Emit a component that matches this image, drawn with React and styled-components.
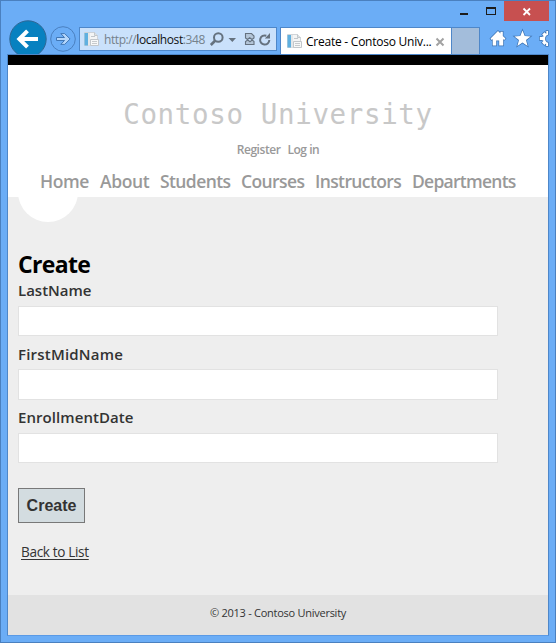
import React from "react";
import styled, { createGlobalStyle } from "styled-components";

const Global = createGlobalStyle`
  * { box-sizing: border-box; }
  html, body { margin: 0; padding: 0; overflow: hidden; }
  body { font-family: "Open Sans", "Noto Sans", sans-serif; }
`;

const Window = styled.div`
  width: 556px;
  height: 643px;
  display: flex;
  flex-direction: column;
  background: #6badf6;
  border: 1px solid #4a80bf;
  padding: 0 6px 6px;
`;

const TitleBar = styled.div`
  height: 20px;
  display: flex;
  justify-content: flex-end;
  flex: none;
`;

const WindowButton = styled.button`
  width: ${(p) => p.$width}px;
  height: 20px;
  padding: 0;
  border: 0;
  background: ${(p) => (p.$close ? "#c75050" : "transparent")};
  svg { display: block; }
`;

const Toolbar = styled.div`
  height: 33px;
  display: flex;
  align-items: flex-end;
  flex: none;
`;

const BackIcon = styled.svg`
  display: block;
  flex: none;
  margin-left: 1px;
`;

const ForwardIcon = styled.svg`
  display: block;
  flex: none;
  margin: 0 2px 1px 1px;
`;

const AddressBar = styled.div`
  width: 198px;
  height: 24px;
  display: flex;
  align-items: center;
  border: 1px solid #4e87c9;
  background: #cae1fb;
  margin-bottom: 3px;
  padding-left: 3px;
  flex: none;
  svg { display: block; flex: none; }
`;

const Address = styled.div`
  width: 102px;
  margin-left: 4px;
  padding-top: 1px;
  white-space: nowrap;
  font: 12px/20px "Open Sans", sans-serif;
  letter-spacing: -0.42px;
  color: #75818c;
  b { font-weight: 400; color: #111; }
`;

const Tab = styled.div`
  width: 172px;
  height: 27px;
  display: flex;
  align-items: center;
  margin-left: 3px;
  padding: 1px 6px 0 5px;
  border: 1px solid #4e87c9;
  border-bottom: 0;
  background: #fff;
  flex: none;
  svg { display: block; flex: none; }
`;

const TabTitle = styled.div`
  width: 130px;
  margin-left: 3px;
  white-space: nowrap;
  font: 12px/20px "Open Sans", sans-serif;
  letter-spacing: -0.24px;
  color: #000;
`;

const NewTab = styled.div`
  width: 28px;
  height: 27px;
  border: 1px solid #4e87c9;
  border-left: 0;
  border-bottom: 0;
  background: #a3bddb;
  flex: none;
`;

const Commands = styled.svg`
  display: block;
  flex: none;
  margin-left: 8px;
`;

const Page = styled.div`
  flex: 1;
  display: flex;
  flex-direction: column;
  border: 1px solid #4e87c9;
  border-bottom-color: #5a9ae6;
  background: #eee;
`;

const Header = styled.header`
  height: 142px;
  flex: none;
  border-top: 10px solid #000;
  background: #fff;
  display: flex;
  flex-direction: column;
  align-items: center;
`;

const SiteTitle = styled.div`
  margin-top: 31px;
  font: 27.5px/36px "DejaVu Sans Mono", monospace;
  letter-spacing: 0.64px;
  white-space: nowrap;
  color: #c8c8c8;
`;

const Account = styled.div`
  display: flex;
  gap: 7px;
  margin-top: 9px;
  font: 600 12px/18px "Open Sans", sans-serif;
  letter-spacing: -0.45px;
  color: #999;
`;

const Nav = styled.nav`
  display: flex;
  align-self: stretch;
  margin-top: 10px;
  padding-left: 32px;
`;

const NavLink = styled.a`
  width: ${(p) => p.$width}px;
  flex: none;
  white-space: nowrap;
  font: 600 17.5px/24px "Open Sans", sans-serif;
  letter-spacing: ${(p) => p.$spacing}px;
  color: #999;
`;

const Main = styled.main`
  flex: 1;
  padding-left: 10px;
`;

const HalfCircle = styled.div`
  width: 60px;
  height: 25px;
  overflow: hidden;
  display: flex;
  align-items: flex-end;
  &::before {
    content: "";
    flex: none;
    width: 60px;
    height: 60px;
    border-radius: 50%;
    background: #fff;
  }
`;

const Heading = styled.h2`
  margin: 27px 0 0;
  font: 700 23px/30px "Open Sans", sans-serif;
  letter-spacing: -0.65px;
  color: #000;
`;

const Field = styled.div`
  height: ${(p) => p.$height}px;
`;

const Label = styled.label`
  display: block;
  height: ${(p) => p.$height || 27}px;
  font: 600 15px/22px "Open Sans", sans-serif;
  letter-spacing: ${(p) => p.$spacing || 0}px;
  color: #333;
`;

const Input = styled.input`
  display: block;
  width: 480px;
  height: ${(p) => p.$height || 30}px;
  border: 1px solid #e2e2e2;
  border-radius: 0;
  background: #fff;
  padding: 5px;
`;

const Submit = styled.button`
  display: block;
  width: 67px;
  height: 35px;
  margin-top: 19px;
  padding: 0;
  border: 1px solid #787878;
  background: #d3dce0;
  font: 700 16px/20px "Liberation Sans", sans-serif;
  color: #333;
`;

const BackLink = styled.a`
  display: inline-block;
  margin: 19px 0 0 3px;
  font: 13.6px/20px "Open Sans", sans-serif;
  letter-spacing: -0.35px;
  text-decoration: underline;
  text-underline-offset: 2px;
  text-decoration-thickness: 1px;
  color: #333;
`;

const Footer = styled.footer`
  height: 40px;
  flex: none;
  background: #e2e2e2;
  text-align: center;
  font: 11px/36px "Open Sans", sans-serif;
  letter-spacing: -0.26px;
  color: #333;
`;

function PageIcon() {
  return (
    <svg width="17" height="17" viewBox="0 0 17 17">
      <path d="M1.5 1.5h10l3 3v10h-13z" fill="#f4f5f5" stroke="#c6cbd0" strokeWidth=".8" />
      <path d="M11.5 1.5v3h3" fill="#dde1e4" stroke="#b9bfc4" strokeWidth=".8" />
      <path d="M1.500 2h3.500v12.500h-3.500z" fill="#5fb0e0" />
      <path d="M5 2h2v12.500H5z" fill="#e5e7e9" />
      <path d="M8 5.500h4M7.500 8.500h8v6h-8z" fill="#f7f8f8" stroke="#c2c7cb" />
      <path d="M9 10.500h5M9 12.500h5" stroke="#c6cacd" />
    </svg>
  );
}

const links = [
  ["Home", 60, -0.4],
  ["About", 60, -0.4],
  ["Students", 81, -0.6],
  ["Courses", 74, -0.6],
  ["Instructors", 97, -0.62],
  ["Departments", 110, -0.74],
];

export default function App() {
  return (
    <>
      <Global />
      <Window>
        <TitleBar>
          <WindowButton $width={28} aria-label="Minimize">
            <svg width="28" height="20"><path d="M9 12h8v2H9z" fill="#1c1c1c" /></svg>
          </WindowButton>
          <WindowButton $width={25} aria-label="Maximize">
            <svg width="25" height="20"><path d="M7 6h10v8H7zM8 8v5h8V8z" fillRule="evenodd" fill="#1c1c1c" /></svg>
          </WindowButton>
          <WindowButton $width={45} $close aria-label="Close">
            <svg width="45" height="20"><path d="M19.500 7.500l6.500 6.500M26 7.500l-6.500 6.500" stroke="#fff" strokeWidth="1.8" /></svg>
          </WindowButton>
        </TitleBar>
        <Toolbar>
          <BackIcon width="40" height="34" viewBox="8 20 40 34">
            <circle cx="28" cy="39" r="18.2" fill="#0781c0" stroke="#2f6795" strokeWidth="1" />
            <path d="M38 39H21M27.500 30.800L19.300 39l8.200 8.200" fill="none" stroke="#fff" strokeWidth="4" />
          </BackIcon>
          <ForwardIcon width="28" height="28" viewBox="49 25 28 28">
            <circle cx="63" cy="39" r="12.3" fill="none" stroke="#4a80c0" />
            <path d="M56.500 37.500h8l-3.700-3.900h3.900l5.400 5.400-5.400 5.400h-3.900l3.700-3.900h-8z" fill="#b4d6fb" stroke="#4077b6" />
          </ForwardIcon>
          <AddressBar>
            <PageIcon />
            <Address>http://<b>localhost</b>:348</Address>
            <svg width="66" height="22" viewBox="206 28 66 22">
              <g fill="none" stroke="#65727f">
                <circle cx="218.300" cy="37.500" r="4.300" strokeWidth="2" />
                <path d="M215.300 40.500l-4.500 4.500" strokeWidth="2.6" />
                <path d="M269.300 40a4.600 4.600 0 1 1-3-4.300" strokeWidth="2" />
                <path d="M245.500 38v-4.500h6l2.500 2.500v2l-2 1.500-2.300-1.800-2.200 1.800zM245.500 44.500v-3l2.300-1.500 2.200 1.800 2.200-1.800 1.800 1.500v3z" fill="#b3c5d8" strokeWidth="1.100" />
              </g>
              <path d="M228.500 38h7.500l-3.700 4zM264.800 38.500h5.200v-5.500z" fill="#65727f" />
            </svg>
          </AddressBar>
          <Tab>
            <PageIcon />
            <TabTitle>Create - Contoso Univ...</TabTitle>
            <svg width="10" height="10"><path d="M1.500 1.500l7 7M8.500 1.500l-7 7" stroke="#a2a2a2" strokeWidth="2" /></svg>
          </Tab>
          <NewTab />
          <Commands width="61" height="27" viewBox="488 27 61 27">
            <g fill="#fff" stroke="#3d73b2" strokeWidth="1.4" paintOrder="stroke">
              <path d="M490.500 38.600l7.500-7.500 2.400 2.400v-1.700h2.400v4.100l2.700 2.700-1.300 1.300-1-.9v6.600h-4v-5h-3v5h-3.500V39l-1 .9z" />
              <path d="M522.500 30.500l2.200 5.600 5.900.3-4.600 3.700 1.600 5.800-5.100-3.300-5.100 3.300 1.600-5.800-4.600-3.700 5.900-.3z" />
              <path d="M548 31h-1.700v3l-1.800-1.800-2.300 2.300 1.600 1.800-2 .6h-2v3.200h2l1.800.7-1.600 1.800 2.300 2.300 1.800-1.500v2.600h1.900v-3.300a4.200 4.200 0 0 1 0-8z" />
            </g>
          </Commands>
        </Toolbar>
        <Page>
          <Header>
            <SiteTitle>Contoso University</SiteTitle>
            <Account><span>Register</span><span>Log in</span></Account>
            <Nav>
              {links.map(([text, width, spacing]) => (
                <NavLink key={text} $width={width} $spacing={spacing}>{text}</NavLink>
              ))}
            </Nav>
          </Header>
          <Main>
            <HalfCircle />
            <Heading>Create</Heading>
            <Field $height={64}><Label>LastName</Label><Input /></Field>
            <Field $height={63}><Label $height={26} $spacing={0.2}>FirstMidName</Label><Input $height={31} /></Field>
            <Field $height={63}><Label $spacing={0.07}>EnrollmentDate</Label><Input /></Field>
            <Submit>Create</Submit>
            <BackLink>Back to List</BackLink>
          </Main>
          <Footer>© 2013 - Contoso University</Footer>
        </Page>
      </Window>
    </>
  );
}
